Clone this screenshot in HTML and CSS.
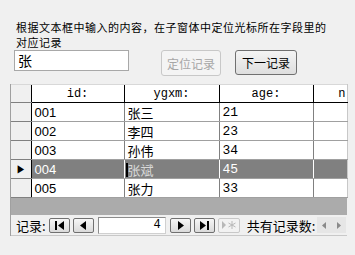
FILE: index.html
```html
<!DOCTYPE html>
<html lang="zh">
<head>
    <meta charset="UTF-8">
    <title>定位记录</title>
    <link rel="stylesheet" href="styles.css">
</head>
<body>
    <div class="form">
        <p class="prompt">根据文本框中输入的内容，在子窗体中定位光标所在字段里的对应记录</p>
        <div class="search">
            <div class="textbox">张</div>
            <button class="btn disabled">定位记录</button>
            <button class="btn">下一记录</button>
        </div>

        <div class="subform">
            <table class="grid">
                <colgroup>
                    <col class="c-sel"><col class="c-id"><col class="c-name"><col class="c-age"><col class="c-more">
                </colgroup>
                <thead>
                    <tr>
                        <th class="sel"></th>
                        <th>id:</th>
                        <th>ygxm:</th>
                        <th>age:</th>
                        <th class="more">n</th>
                    </tr>
                </thead>
                <tbody>
                    <tr><td class="sel"></td><td>001</td><td class="name">张三</td><td class="age">21</td><td></td></tr>
                    <tr><td class="sel"></td><td>002</td><td class="name">李四</td><td class="age">23</td><td></td></tr>
                    <tr><td class="sel"></td><td>003</td><td class="name">孙伟</td><td class="age">34</td><td></td></tr>
                    <tr class="current">
                        <td class="sel"><span class="arrow">&#9654;</span></td>
                        <td>004</td>
                        <td class="name"><span class="caret"></span><span class="picked">张斌</span></td>
                        <td class="age">45</td>
                        <td></td>
                    </tr>
                    <tr><td class="sel"></td><td>005</td><td class="name">张力</td><td class="age">33</td><td></td></tr>
                </tbody>
            </table>
            <div class="blank"></div>
            <div class="nav">
                <span class="nav-label">记录:</span>
                <button class="nb">
                    <svg width="11" height="9" viewBox="0 0 11 9"><rect x="1" y="0" width="2" height="9"/><path d="M10 0 L4 4.5 L10 9 Z"/></svg>
                </button>
                <button class="nb">
                    <svg width="11" height="9" viewBox="0 0 11 9"><path d="M8 0 L2 4.5 L8 9 Z"/></svg>
                </button>
                <div class="nav-box">4</div>
                <button class="nb">
                    <svg width="11" height="9" viewBox="0 0 11 9"><path d="M3 0 L9 4.5 L3 9 Z"/></svg>
                </button>
                <button class="nb">
                    <svg width="11" height="9" viewBox="0 0 11 9"><path d="M1 0 L7 4.5 L1 9 Z"/><rect x="8" y="0" width="2" height="9"/></svg>
                </button>
                <button class="nb off">
                    <svg width="16" height="10" viewBox="0 0 16 10"><path d="M1 1 L5 5 L1 9 Z" fill="#b8b8b8"/><path d="M11 1 V9 M7.5 3 L14.5 7 M7.5 7 L14.5 3" stroke="#b8b8b8" stroke-width="1" fill="none"/></svg>
                </button>
                <span class="nav-total">共有记录数:</span>
                <div class="hscroll">
                    <svg width="4" height="7" viewBox="0 0 4 7"><path d="M4 0 L0 3.5 L4 7 Z" fill="#8a8a8a"/></svg>
                    <svg width="4" height="7" viewBox="0 0 4 7"><path d="M0 0 L4 3.5 L0 7 Z" fill="#8a8a8a"/></svg>
                </div>
            </div>
        </div>
    </div>
</body>
</html>
```

FILE: styles.css
```css
body {
    margin: 0;
    background: #f0f0f0;
    font-family: "Noto Sans CJK SC", "Liberation Sans", sans-serif;
    color: #000;
}
.form {
    width: 355px;
    height: 255px;
    overflow: hidden;
}
.prompt {
    margin: 0;
    padding: 20px 0 0 16px;
    width: 320px;
    font-size: 11px;
    line-height: 15px;
    letter-spacing: 0.5px;
}
.search {
    display: flex;
    align-items: flex-start;
    padding: 0 0 0 14px;
    height: 34px;
}
.textbox {
    width: 110px;
    height: 19px;
    background: #fff;
    border: 1px solid #a8a8a8;
    padding-left: 3px;
    font-size: 14px;
    line-height: 19px;
}
.btn {
    height: 26px;
    margin-left: 32px;
    padding: 0;
    border: 1px solid #707070;
    border-radius: 3px;
    background: linear-gradient(#f4f4f4, #dedede);
    font-family: "Noto Sans CJK SC", sans-serif;
    font-size: 12px;
    color: #000;
}
.btn.disabled {
    width: 60px;
    border-color: #c8c8c8;
    background: #f4f4f4;
    color: #a6a6a6;
}
.btn + .btn {
    width: 62px;
    margin-left: 14px;
    height: 25px;
}
.subform {
    margin-left: 10px;
    width: 337px;
    border-left: 1px solid #a0a0a0;
    box-sizing: border-box;
    background: #ababab;
}
.grid {
    border-collapse: collapse;
    table-layout: fixed;
    width: 336px;
    background: #fff;
}
.c-sel { width: 20px; }
.c-id { width: 93px; }
.c-name { width: 95px; }
.c-age { width: 94px; }
.c-more { width: 34px; }
.grid th {
    height: 17px;
    padding: 0;
    font-family: "Liberation Mono", monospace;
    font-weight: normal;
    font-size: 12px;
    line-height: 16px;
    text-align: center;
    background: #fff;
    border-left: 1px solid #000;
    border-bottom: 1px solid #000;
    border-top: 1px solid #d8d8d8;
}
.grid th.sel {
    background: #f0f0f0;
    border-left: none;
    border-bottom-color: #808080;
}
.grid th.more {
    text-align: right;
    padding-right: 1px;
    overflow: hidden;
    border-right: 1px solid #c8c8c8;
}
.grid td {
    height: 18px;
    padding: 0 0 0 3px;
    font-family: "Liberation Sans", sans-serif;
    font-size: 13px;
    line-height: 17px;
    border-left: 1px solid #808080;
    border-bottom: 1px solid #a0a0a0;
    white-space: nowrap;
    overflow: hidden;
}
.grid td:last-child {
    border-right: 1px solid #c8c8c8;
}
.grid td.sel {
    padding: 0;
    background: #f0f0f0;
    border-left: none;
    border-right: 1px solid #000;
    border-bottom-color: #808080;
    text-align: center;
}
.grid td.name {
    font-family: "Noto Sans CJK SC", sans-serif;
    font-size: 13px;
}
.grid td.age {
    font-family: "Liberation Mono", monospace;
    font-size: 13px;
}
.current td {
    background: #808080;
    color: #fff;
    border-left-color: #fff;
}
.current td.sel {
    color: #000;
}
.arrow {
    font-size: 10px;
}
.caret {
    display: inline-block;
    width: 2px;
    height: 14px;
    background: #000;
    vertical-align: -2px;
    margin-left: -2px;
}
.picked {
    color: #d8d8d8;
}
.blank {
    height: 17px;
    background: #ababab;
}
.nav {
    display: flex;
    align-items: center;
    height: 20px;
    background: #f0f0f0;
    border-bottom: 1px solid #c8c8c8;
    font-size: 13px;
}
.nav-label {
    margin-left: 5px;
    margin-right: 3px;
}
.nb {
    width: 21px;
    height: 15px;
    margin-right: 3px;
    padding: 0;
    display: flex;
    align-items: center;
    justify-content: center;
    border: 1px solid #707070;
    border-radius: 2px;
    background: linear-gradient(#f6f6f6, #dadada);
}
.nb.off {
    width: 22px;
    border-color: #c8c8c8;
    background: #f2f2f2;
}
.nav-box {
    width: 62px;
    height: 15px;
    margin: 0 4px 0 1px;
    padding-right: 4px;
    background: #fff;
    border: 1px solid #8c8c8c;
    border-right-color: #d0d0d0;
    border-bottom-color: #d0d0d0;
    text-align: right;
    font-family: "Liberation Mono", monospace;
    font-size: 12px;
    line-height: 15px;
}
.nav-total {
    margin-left: 4px;
}
.hscroll {
    flex: 1;
    display: flex;
    justify-content: space-around;
    align-items: center;
    align-self: stretch;
    margin: 2px 1px 2px 2px;
    background: #e6e6e6;
}
```
